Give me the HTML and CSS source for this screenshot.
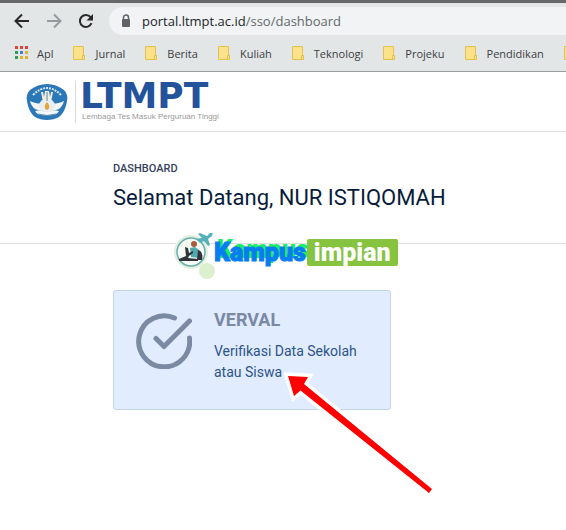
FILE: index.html
```html
<!DOCTYPE html>
<html lang="id">
<head>
<meta charset="utf-8">
<title>Dashboard</title>
<link rel="stylesheet" href="styles.css">
</head>
<body>
<svg class="defs" aria-hidden="true">
  <symbol id="folder" viewBox="0 0 14 16">
    <path d="M1.5 1.5h9v9h1v4h-11v-13z" fill="#fde28c" stroke="#e5c04d"/>
    <path d="M9.500 14v-3.500h2" fill="none" stroke="#e5c04d"/>
  </symbol>
</svg>
<header class="browser">
  <div class="toolbar">
    <button class="nav" aria-label="Kembali"><svg width="16" height="16" viewBox="0 0 16 16"><path d="M15 8H2M8 1.500L1.500 8 8 14.500" /></svg></button>
    <button class="nav nav-off" aria-label="Maju"><svg width="16" height="16" viewBox="0 0 16 16"><path d="M1 8h13M8 1.500L14.500 8 8 14.500" /></svg></button>
    <button class="nav" aria-label="Muat ulang"><svg width="16" height="16" viewBox="0 0 16 16"><path d="M13.500 10.200A6 6 0 1 1 12.600 4.200"/><path class="solid" d="M15 1v6.500H8.500z"/></svg></button>
    <div class="address">
      <svg width="10" height="14" viewBox="0 0 10 14"><path d="M2.500 6V3.500a2.500 2.500 0 0 1 5 0V6" fill="none" stroke="#5f6368" stroke-width="1.500"/><rect x="1" y="5" width="8" height="8" rx="1" fill="#5f6368"/></svg>
      <span><b>portal.ltmpt.ac.id</b>/sso/dashboard</span>
    </div>
  </div>
  <nav class="bookmarks">
    <a href="#"><svg width="14" height="14" viewBox="0 0 14 14"><path fill="#d9453b" d="M0 0h3v3H0zM5 0h3v3H5zM10 0h3v3h-3z"/><path fill="#2f9e58" d="M0 5h3v3H0zM0 10h3v3H0z"/><path fill="#3f7fe0" d="M5 5h3v3H5z"/><path fill="#e2b02e" d="M10 5h3v3h-3zM10 10h3v3h-3zM5 10h3v3H5z"/></svg>Apl</a>
    <a href="#"><svg width="14" height="16"><use href="#folder"/></svg>Jurnal</a>
    <a href="#"><svg width="14" height="16"><use href="#folder"/></svg>Berita</a>
    <a href="#"><svg width="14" height="16"><use href="#folder"/></svg>Kuliah</a>
    <a href="#"><svg width="14" height="16"><use href="#folder"/></svg>Teknologi</a>
    <a href="#"><svg width="14" height="16"><use href="#folder"/></svg>Projeku</a>
    <a href="#"><svg width="14" height="16"><use href="#folder"/></svg>Pendidikan</a>
    <a href="#" aria-label="Lainnya"><svg width="14" height="16"><use href="#folder"/></svg></a>
  </nav>
</header>
<div class="brand">
  <svg width="42" height="38" viewBox="0 0 42 38" aria-hidden="true">
    <path d="M21 1C27 1 33 3 38 7c3 3 4 7 3 11-1 7-4 13-8 16-7 4-17 4-24 0C5 31 2 25 1 18 0 14 1 10 4 7 9 3 15 1 21 1z" fill="#2b78b8"/>
    <path d="M7 12Q21 -2 35 12" fill="none" stroke="#d6e8f3" stroke-width="2" stroke-dasharray="2 1"/>
    <path d="M4 18c4 2 7 2 11 3l1 6c-6 1-10-2-12-9zM38 18c-4 2-7 2-11 3l-1 6c6 1 10-2 12-9z" fill="#f4f8fa"/>
    <path d="M9 28c4-1 8-1 12 1 4-2 8-2 12-1-2 4-7 5-12 4-5 1-10 0-12-4z" fill="#f4f8fa"/>
    <path d="M15 9h2l1 5 1-6h4l1 6 1-5h2l-2 10h-8z" fill="#f1efe2"/>
    <path d="M16 17h10l4 5-4 7H16l-4-7z" fill="#e9eef0"/>
    <path d="M21 19c3 3 3 7 0 8-3-1-3-5 0-8z" fill="#e5a43f"/>
    <path d="M21 9v9M12 31q9 3 18 0" fill="none" stroke="#5b87a6"/>
  </svg>
  <div class="brand-text">
    <div class="brand-name">LTMPT</div>
    <div class="brand-sub">Lembaga Tes Masuk Perguruan Tinggi</div>
  </div>
</div>
<main>
  <section class="heading">
    <p>DASHBOARD</p>
    <h1>Selamat Datang, NUR ISTIQOMAH</h1>
    <div class="watermark">
      <svg width="42" height="56" viewBox="0 0 42 56" aria-hidden="true">
        <circle cx="17" cy="19" r="17" fill="#e4f1dc"/>
        <circle cx="33" cy="38" r="8" fill="#dcefcf"/>
        <circle cx="17" cy="19" r="14" fill="#f6faf5" stroke="#68adb3" stroke-width="1.500"/>
        <path d="M22 6l6-1-4-4 2-1 7 3 3-3 3-1-1 4-4 3 2 6-2 1-4-5-4 2z" fill="#55b1b8"/>
        <circle cx="20" cy="11" r="3" fill="#a65b3c"/>
        <path d="M16 15l5-1 4 3v8l-8-1z" fill="#4eaaaf"/>
        <path d="M24 17c4 1 5 5 4 10h-5zM11 14l3 1 1 5 4-2v2l-4 3-1 2 10 1v2H5v-2l7-3z" fill="#30343a"/>
      </svg>
      <strong class="kampus">Kampus</strong><strong class="impian">impian</strong>
    </div>
  </section>
  <a class="card" href="#">
    <svg class="check" width="56" height="56" viewBox="0 0 56 56" aria-hidden="true"><path d="M38.500 5A25.500 25.500 0 1 0 53.500 25M20 25.500l8 8L53.500 8"/></svg>
    <span class="card-text"><strong>VERVAL</strong><span>Verifikasi Data Sekolah atau Siswa</span></span>
    <svg class="arrow" width="152" height="126" viewBox="0 0 152 126" aria-hidden="true"><path d="M4 5L24 6l-4 7 128 105-3 4L16.500 19.500 10 25z" fill="#fff" stroke="#fff" stroke-width="7"/><path d="M4 5L24 6l-4 7 128 105-3 4L16.500 19.500 10 25z" fill="#fe0000"/></svg>
  </a>
</main>
</body>
</html>
```

FILE: styles.css
```css
* { box-sizing: border-box; }
body { margin: 0; min-height: 100vh; background: #fff; font-family: Roboto, sans-serif; color: #0b1f3c; }
p, h1 { margin: 0; }
a { color: inherit; text-decoration: none; }
svg { display: block; flex: none; }
.defs { position: absolute; width: 0; height: 0; }

.browser { background: #e3e6e7; border-top: 3px solid #656867; border-bottom: 1px solid #9c9f9f; overflow: hidden; font-family: "Open Sans", sans-serif; }
.toolbar { display: flex; align-items: center; gap: 16px; padding: 4px 0 0 14px; }
.nav { border: 0; padding: 0; background: none; }
.nav path { fill: none; stroke: #27292b; stroke-width: 2; }
.nav-off path { stroke: #979a9c; }
.nav .solid { fill: #27292b; stroke: none; }
.address { flex: 1; display: flex; align-items: center; gap: 11px; height: 28px; padding-left: 12px; margin-left: -1px; border-radius: 14px 0 0 14px; background: #f1f3f4; font-size: 13px; color: #64686b; }
.address b { font-weight: 400; color: #222528; }
.bookmarks { display: flex; height: 36px; align-items: center; gap: 20px; padding-left: 15px; font-size: 11px; color: #3d4043; }
.bookmarks a { display: flex; align-items: center; gap: 8px; white-space: nowrap; }

.brand { display: flex; align-items: center; gap: 7px; height: 60px; padding-left: 26px; border-bottom: 1px solid #dfe0e1; }
.brand-text { border-left: 1px solid #d5d8da; padding-left: 4px; }
.brand-name { font: bold 36px/30px "DejaVu Sans", sans-serif; color: #23539b; }
.brand-sub { padding-left: 2px; font: 8px/12px "Liberation Sans", sans-serif; color: #999; white-space: nowrap; }

.heading { position: relative; height: 112px; padding: 30px 0 0 113px; border-bottom: 1px solid #dfe0e1; }
.heading p { font-size: 11px; line-height: 14px; font-weight: 500; color: #34415a; }
.heading h1 { margin-top: 10px; font-size: 22px; line-height: 24px; font-weight: 400; color: #071c3c; }
.watermark { position: absolute; left: 174px; top: 101px; display: flex; align-items: flex-start; }
.watermark strong { font: 900 25px/27px Roboto, sans-serif; margin-top: 6px; }
.watermark .kampus { margin: 6px 1px 0 -2px; color: #087df0; -webkit-text-stroke: 1px #087df0; text-shadow: 3px -3px #19ed68; }
.impian { color: #fff; background: #86c440; border-radius: 2px; padding: 0 7px; }

.card { position: relative; display: flex; gap: 22px; width: 278px; margin: 46px 0 0 113px; padding: 18px 22px 26px; background: #e1ecff; border: 1px solid #c3d3e8; border-radius: 3px; }
.check { margin-top: 4px; }
.check path { fill: none; stroke: #7b89a3; stroke-width: 5; stroke-linecap: round; stroke-linejoin: round; }
.card-text { font-size: 14px; line-height: 21px; color: #2d5487; }
.card-text strong { display: block; margin-bottom: 10px; font-size: 18px; line-height: 22px; color: #7b89a3; }
.card-text span { display: block; }
.arrow { position: absolute; left: 170px; top: 80px; }
```
